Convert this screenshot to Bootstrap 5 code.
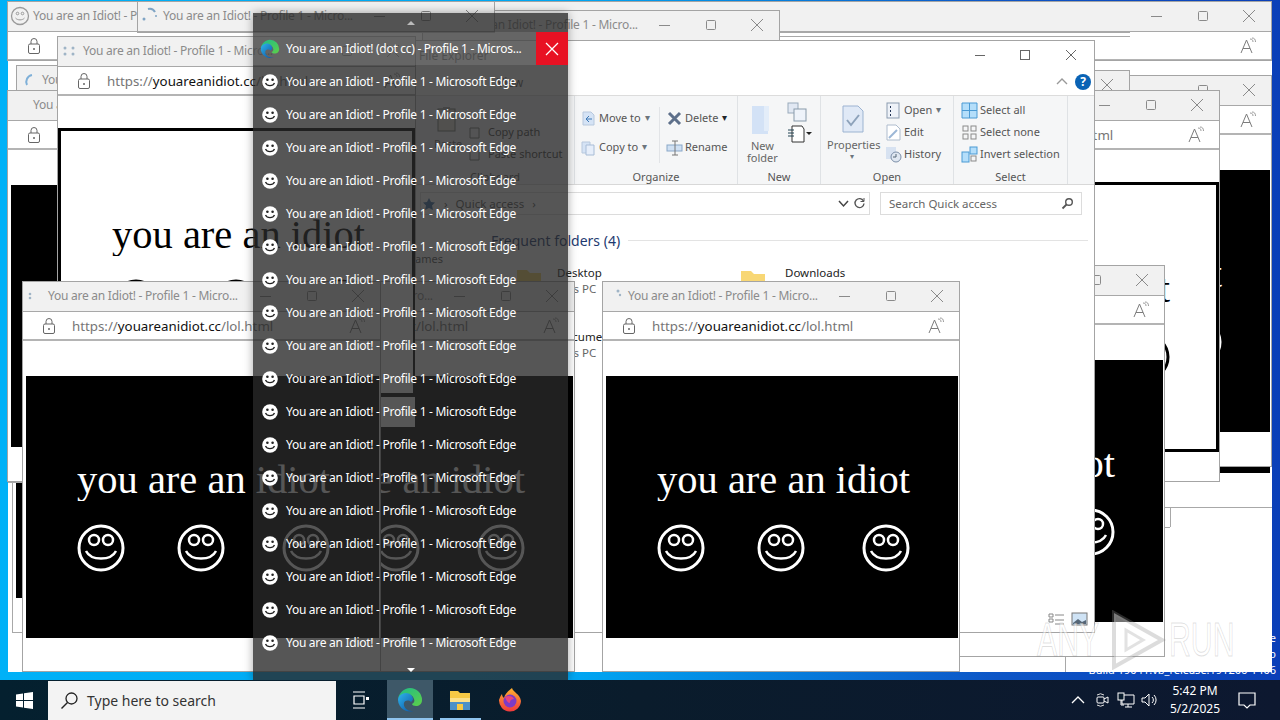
<!DOCTYPE html>
<html lang="en">
<head>
  <meta charset="UTF-8">
  <title>You are an Idiot!</title>
  <link href="https://cdn.jsdelivr.net/npm/bootstrap@5.3.0/dist/css/bootstrap.min.css" rel="stylesheet">
  <style>
    html, body { margin: 0; width: 1280px; height: 720px; overflow: hidden; background: #000; }
    body, .ui-font { font-family: "Noto Sans", "Open Sans", sans-serif; }
    .desk { position: relative; width: 1280px; height: 720px; overflow: hidden; background: linear-gradient(90deg, #00b1f7 0%, #00a6f2 45%, #0d55c6 78%, #0a3fb8 100%); }
    .free { position: absolute; }
    .base-sheet { left: 8px; top: 1px; width: 1264px; height: 671px; background: #fff; border-top: 1px solid #a8a8a8; }
    .build-notes { right: 4px; bottom: 42px; color: #fff; font-size: 11px; line-height: 16px; text-align: right; white-space: nowrap; }

    /* edge app windows */
    .app-win { position: absolute; background: #fff; border: 1px solid #a4a4a4; overflow: hidden; }
    .app-title { height: 30px; background: #f1f1f1; border-bottom: 1px solid #a8a8a8; color: #8b8b8b; font-size: 12px; letter-spacing: -.25px; padding: 0 0 2px 25px; position: relative; white-space: nowrap; }
    .app-ico { position: absolute; left: 2px; top: 4px; width: 20px; height: 20px; }
    .app-btn { position: absolute; top: 6px; width: 16px; height: 16px; }
    .btn-x { right: 14px; } .btn-m { right: 60px; } .btn-n { right: 106px; }
    .app-url { height: 29px; border-bottom: 2px solid #b4b4b4; color: #757575; font-size: 13.3px; padding: 2px 0 0 49px; position: relative; white-space: nowrap; }
    .app-url b { color: #111; font-weight: 400; }
    .ico-lock { position: absolute; left: 18px; top: 5px; width: 16px; height: 18px; }
    .ico-read { position: absolute; right: 13px; top: 5px; width: 18px; height: 18px; }
    .page-black { position: absolute; left: 3px; right: 1px; top: 94px; height: 262px; background: #000; color: #fff; padding: 83px 0 0 51px; }
    .page-white { position: absolute; left: 0; right: 0; top: 91px; height: 270px; background: #fff; color: #000; border: 3px solid #000; padding: 83px 0 0 51px; }
    .idiot-line { width: 254px; height: 42px; line-height: 42px; overflow: hidden; font-family: "Liberation Serif", serif; font-size: 40.5px; white-space: nowrap; }
    .face-row { margin-top: 23px; width: 253px; }
    .face-row svg { width: 48px; height: 48px; flex: none; }
    .face-row svg:nth-child(2) { margin-left: 52px; }
    .face-row svg:nth-child(3) { margin-left: 57px; }

    /* scraps of windows further down the pile */
    .scrap-k { position: absolute; background: #000; }
    .scrap-l { position: absolute; background: #a8a8a8; }
    .scrap-w { position: absolute; background: #fff; }

    /* file explorer */
    .explorer { left: 415px; top: 40px; width: 680px; height: 593px; background: #fff; border: 1px solid #a4a4a4; color: #444; font-size: 11px; }
    .ex-head { height: 29px; font-size: 12px; padding-left: 3px; position: relative; color: #777; }
    .ex-head .app-btn { top: 6px; }
    .ex-head .btn-x { right: 15px; } .ex-head .btn-m { right: 61px; } .ex-head .btn-n { right: 106px; }
    .ex-tabs { height: 25px; position: relative; color: #666; font-size: 12px; }
    .ex-tabs span { position: absolute; left: 81px; top: 4px; }
    .ex-help { position: absolute; right: 3px; top: 4px; width: 16px; height: 16px; border-radius: 50%; background: #0a63b5; color: #fff; font-size: 12px; font-weight: 700; line-height: 16px; text-align: center; }
    .ex-up { position: absolute; right: 26px; top: 7px; width: 12px; height: 10px; }
    .ribbon { height: 90px; background: #f5f6f7; border-top: 1px solid #dcdcdc; border-bottom: 1px solid #d8d8d8; }
    .rb-group { position: relative; height: 88px; border-right: 1px solid #dfe2e5; flex: none; }
    .rb-label { position: absolute; left: 0; right: 0; bottom: -1px; text-align: center; color: #555; font-size: 11px; }
    .rb-small { height: 22px; white-space: nowrap; color: #555; }
    .rb-small svg { width: 17px; height: 17px; margin-right: 2px; flex: none; }
    .rb-big { text-align: center; color: #666; line-height: 12px; }
    .grp-clip { width: 159px; } .grp-org { width: 163px; padding-top: 11px; } .grp-new { width: 83px; } .grp-open { width: 133px; } .grp-sel { width: 114px; padding: 3px 0 0 7px; }
    .org-left { width: 85px; padding-left: 5px; border-right: 1px solid #e2e4e7; height: 56px; }
    .org-right { padding-left: 6px; }
    .org-left .rb-small, .org-right .rb-small { margin-bottom: 7px; }
    .crumb-row { height: 36px; padding: 7px 12px 6px 4px; }
    .crumb-box { flex: 1; height: 23px; border: 1px solid #dcdcdc; color: #555; font-size: 11.5px; padding-left: 1px; position: relative; }
    .find-box { width: 202px; height: 23px; margin-left: 10px; border: 1px solid #dcdcdc; color: #666; padding-left: 8px; font-size: 11.5px; position: relative; }
    .freq-head { color: #1e3a70; font-size: 14px; padding-left: 75px; height: 20px; margin-top: 9px; white-space: nowrap; }
    .freq-head i { flex: 1; height: 1px; background: #e3e3e3; margin: 0 6px 0 8px; }
    .ghost-names { position: absolute; left: -1px; top: 210px; color: #555; font-size: 11px; }
    .tile { position: absolute; white-space: nowrap; line-height: 16px; color: #222; font-size: 11.5px; }
    .tile span { display: block; color: #666; }
    .view-ico { position: absolute; bottom: 6px; width: 17px; height: 14px; }

    /* taskbar window list */
    .thumb-list { left: 253px; top: 13px; width: 315px; height: 667px; background: rgba(40, 40, 40, .79); box-shadow: 0 0 9px rgba(0, 0, 0, .35); color: #fff; font-size: 12px; letter-spacing: -.28px; }
    .thumb-cap { height: 19px; }
    .thumb-row { height: 33px; padding-left: 7px; position: relative; white-space: nowrap; }
    .thumb-row svg { width: 20px; height: 20px; margin-right: 6px; flex: none; }
    .thumb-on { background: rgba(255, 255, 255, .11); }
    .thumb-close { position: absolute; right: 0; top: 0; width: 32px; height: 33px; background: #e81123; }
    .thumb-close svg { margin: 0; width: 16px; height: 16px; }
    .tri-up { width: 0; height: 0; border-left: 4px solid transparent; border-right: 4px solid transparent; border-bottom: 4px solid #bbb; }
    .tri-down { width: 0; height: 0; border-left: 4px solid transparent; border-right: 4px solid transparent; border-top: 4px solid #fff; margin-top: 9px; }

    /* watermark */
    .mark-any { left: 1037px; top: 610px; height: 60px; color: rgba(255, 255, 255, .5); font-family: "Liberation Sans", sans-serif; font-size: 48px; line-height: 60px; -webkit-text-stroke: 1px rgba(130, 130, 130, .25); white-space: nowrap; }
    .mark-any svg { width: 60px; height: 60px; flex: none; margin: 0 1px 0 5px; }
    .mark-txt { display: inline-block; width: 66px; transform: scaleX(.63); transform-origin: left center; }

    /* taskbar */
    .taskbar { left: 0; right: 0; bottom: 0; height: 40px; background: linear-gradient(90deg, #04202f 0%, #0a1c2c 50%, #0d1830 100%); color: #fff; }
    .start-cell { width: 48px; height: 40px; flex: none; }
    .find-cell { width: 288px; height: 39px; margin-top: 1px; background: #f3f3f3; color: #333; font-size: 14px; padding-left: 12px; flex: none; }
    .find-cell svg { width: 19px; height: 19px; margin-right: 8px; }
    .view-cell { width: 49px; height: 40px; flex: none; margin-right: 2px; }
    .tb-cell { width: 46px; height: 40px; flex: none; position: relative; }
    .tb-cell svg { width: 26px; height: 26px; }
    .tb-live { background: #3e5868; }
    .tb-live::after, .tb-run::after { content: ""; position: absolute; left: 0; right: 0; bottom: 0; height: 2px; background: #8fc4ee; }
    .tb-run::after { left: 3px; right: 2px; }
    .tray-wrap { margin-left: auto; height: 40px; margin-right: 14px; }
    .tray-ico { width: 24px; height: 40px; }
    .tray-ico svg { width: 20px; height: 20px; }
    .clock { width: 66px; text-align: center; font-size: 12px; line-height: 18px; }
    .note-cell { width: 38px; height: 40px; }
    .note-cell svg { width: 20px; height: 20px; }
  </style>
</head>
<body>
  <div class="desk">
    <div class="free build-notes">Test Mode<br>Windows 10 Pro<br>Build 19041.vb_release.191206-1406</div>
    <div class="free base-sheet"></div>

    <div id="pile-back"></div>

    <!-- file explorer -->
    <div class="free explorer d-flex flex-column">
      <div class="ex-head d-flex align-items-center">
        File Explorer
        <svg class="app-btn btn-x" viewBox="0 0 16 16"><path d="M3 3l10 10M13 3L3 13" stroke="#666" fill="none"/></svg>
        <svg class="app-btn btn-m" viewBox="0 0 16 16"><rect x="3.5" y="3.5" width="9" height="9" stroke="#666" fill="none"/></svg>
        <svg class="app-btn btn-n" viewBox="0 0 16 16"><path d="M3 8.5h10" stroke="#666"/></svg>
      </div>
      <div class="ex-tabs">
        <span>View</span>
        <svg class="ex-up" viewBox="0 0 12 10"><path d="M1 7l5-5 5 5" stroke="#999" fill="none" stroke-width="1.4"/></svg>
        <div class="ex-help">?</div>
      </div>
      <div class="ribbon d-flex">
        <div class="rb-group grp-clip">
          <svg class="free" style="left:21px;top:10px" width="20" height="26" viewBox="0 0 20 26"><rect x="1" y="3" width="17" height="22" fill="#e8e4d8" stroke="#777"/><rect x="6" y="1" width="7" height="4" fill="#aaa"/></svg>
          <div class="free rb-big" style="left:18px;top:42px">Paste</div>
          <svg class="free" style="left:52px;top:30px" width="14" height="14" viewBox="0 0 14 14"><path d="M2 2h9v10H2z" fill="none" stroke="#777"/></svg>
          <div class="free" style="left:72px;top:28px">Copy path</div>
          <svg class="free" style="left:52px;top:52px" width="14" height="14" viewBox="0 0 14 14"><path d="M2 2h9v10H2z" fill="none" stroke="#777"/></svg>
          <div class="free" style="left:72px;top:50px">Paste shortcut</div>
          <div class="rb-label">Clipboard</div>
        </div>
        <div class="rb-group grp-org d-flex">
          <div class="org-left">
            <div class="rb-small d-flex align-items-center"><svg viewBox="0 0 17 17"><path d="M3 2h8l3 3v10H3z" fill="#d5e3f5" stroke="#b7c8dd"/><path d="M12 9H6m3-3L6 9l3 3" stroke="#3c78b5" fill="none"/></svg>Move to <small class="ms-1 text-secondary">▾</small></div>
            <div class="rb-small d-flex align-items-center"><svg viewBox="0 0 17 17"><path d="M2 3h8v11H2z" fill="#d5e3f5" stroke="#b7c8dd"/><path d="M6 6h8v10H6z" fill="#e6eefa" stroke="#a8bcd6"/></svg>Copy to <small class="ms-1 text-secondary">▾</small></div>
          </div>
          <div class="org-right">
            <div class="rb-small d-flex align-items-center"><svg viewBox="0 0 17 17"><path d="M3 3l11 11M14 3L3 14" stroke="#5d6f8a" stroke-width="3"/></svg>Delete <small class="ms-1 text-dark">▾</small></div>
            <div class="rb-small d-flex align-items-center"><svg viewBox="0 0 17 17"><rect x="1" y="6" width="15" height="6" fill="#cfe0f3" stroke="#8aa7c8"/><path d="M9 2v14M6 2h6M6 16h6" stroke="#777" fill="none"/></svg>Rename</div>
          </div>
          <div class="rb-label">Organize</div>
        </div>
        <div class="rb-group grp-new">
          <svg class="free" style="left:12px;top:9px" width="22" height="30" viewBox="0 0 22 30"><path d="M2 1h16v28H2z" fill="#d3e2f6"/><path d="M14 1h5v25h-5z" fill="#e3edf9"/></svg>
          <div class="free rb-big" style="left:9px;top:44px">New<br>folder</div>
          <svg class="free" style="left:48px;top:6px" width="26" height="20" viewBox="0 0 26 20"><rect x="2" y="1" width="10" height="10" fill="#e1e8f3" stroke="#9ab"/><rect x="8" y="7" width="12" height="12" fill="#eef3fa" stroke="#89a"/></svg>
          <svg class="free" style="left:48px;top:28px" width="26" height="20" viewBox="0 0 26 20"><path d="M6 2h10l2 3v13H6z" fill="#fff" stroke="#333"/><path d="M2 6h6M2 9h6M2 12h6" stroke="#245" /><path d="M20 8l3 3 3-3z" fill="#222"/></svg>
          <div class="rb-label">New</div>
        </div>
        <div class="rb-group grp-open">
          <svg class="free" style="left:21px;top:9px" width="22" height="28" viewBox="0 0 22 28"><path d="M1 1h15l5 5v21H1z" fill="#e0e9f6" stroke="#9cb3d1"/><path d="M5 15l4 5 8-10" stroke="#8da2ba" stroke-width="2" fill="none"/></svg>
          <div class="free rb-big" style="left:6px;top:43px">Properties</div>
          <div class="free text-secondary" style="left:29px;top:54px;font-size:8px">▾</div>
          <div class="free" style="left:64px;top:3px">
            <div class="rb-small d-flex align-items-center"><svg viewBox="0 0 17 17"><rect x="2" y="1" width="12" height="15" fill="#eef2f8" stroke="#8b9bb0"/><path d="M5 5h1M5 9h1M5 13h1" stroke="#235" stroke-width="2"/></svg>Open <small class="ms-1 text-secondary">▾</small></div>
            <div class="rb-small d-flex align-items-center"><svg viewBox="0 0 17 17"><path d="M2 1h9l4 4v11H2z" fill="#fff" stroke="#aebccd"/><path d="M4 14l8-8" stroke="#9cb7d6" stroke-width="2"/></svg>Edit</div>
            <div class="rb-small d-flex align-items-center"><svg viewBox="0 0 17 17"><rect x="1" y="1" width="10" height="12" fill="#d7e2f1"/><circle cx="11" cy="11" r="5" fill="#dfe7f1" stroke="#7c8fa8"/><path d="M11 8v3h-3" stroke="#567" fill="none"/></svg>History</div>
          </div>
          <div class="rb-label">Open</div>
        </div>
        <div class="rb-group grp-sel">
          <div class="rb-small d-flex align-items-center"><svg viewBox="0 0 17 17"><path d="M1 1h15v15H1z" fill="#b4defa" stroke="#4a9ad4"/><path d="M8.5 1v15M1 8.5h15" stroke="#4a9ad4"/></svg>Select all</div>
          <div class="rb-small d-flex align-items-center"><svg viewBox="0 0 17 17"><g fill="none" stroke="#8a8a8a"><rect x="2" y="2" width="5" height="5"/><rect x="10" y="2" width="5" height="5"/><rect x="2" y="10" width="5" height="5"/><rect x="10" y="10" width="5" height="5"/></g></svg>Select none</div>
          <div class="rb-small d-flex align-items-center"><svg viewBox="0 0 17 17"><rect x="1" y="6" width="7" height="10" fill="#b4defa" stroke="#4a9ad4"/><rect x="9" y="1" width="7" height="7" fill="#b4defa" stroke="#4a9ad4"/><rect x="10" y="10" width="5" height="5" fill="none" stroke="#8a8a8a"/></svg>Invert selection</div>
          <div class="rb-label">Select</div>
        </div>
      </div>
      <div class="crumb-row d-flex">
        <div class="crumb-box d-flex align-items-center">
          <svg width="14" height="14" viewBox="0 0 14 14" class="me-1"><path d="M7 1l2 4 4 .5-3 3 1 4.5-4-2-4 2 1-4.5-3-3L5 5z" fill="#3a6ea5"/></svg>
          <span class="ms-1 me-2">›</span>Quick access<span class="ms-2">›</span>
          <svg class="free" style="right:20px;top:6px" width="11" height="10" viewBox="0 0 11 10"><path d="M1 2l4.5 5L10 2" stroke="#444" fill="none" stroke-width="1.5"/></svg>
          <svg class="free" style="right:3px;top:4px" width="13" height="13" viewBox="0 0 13 13"><path d="M10.5 4A4.5 4.5 0 1 0 11 6.500" stroke="#555" fill="none" stroke-width="1.4"/><path d="M11 1v3.500H7.500" stroke="#555" fill="none"/></svg>
        </div>
        <div class="find-box d-flex align-items-center">Search Quick access
          <svg class="free" style="right:7px;top:4px" width="13" height="13" viewBox="0 0 13 13"><circle cx="8" cy="5" r="3.300" stroke="#555" fill="none" stroke-width="1.400"/><path d="M5.500 7.500L1.500 11.500" stroke="#555" stroke-width="1.800"/></svg>
        </div>
      </div>
      <div class="freq-head d-flex align-items-center">Frequent folders (4)<i></i></div>
      <div class="ghost-names">ames</div>
      <svg class="free" style="left:100px;top:228px" width="26" height="22" viewBox="0 0 26 22"><path d="M1 1h10l3 3h11v17H1z" fill="#f6d365"/></svg>
      <div class="tile" style="left:141px;top:224px">Desktop<span>This PC</span></div>
      <svg class="free" style="left:324px;top:229px" width="26" height="22" viewBox="0 0 26 22"><path d="M1 1h10l3 3h11v17H1z" fill="#f8d775"/></svg>
      <div class="tile" style="left:369px;top:224px">Downloads</div>
      <div class="tile" style="left:141px;top:288px">Documents<span>This PC</span></div>
      <svg class="view-ico" style="right:29px" viewBox="0 0 17 14"><path d="M1 2h4v3H1zM1 7h4v3H1zM7 3h9M7 8h9M7 12h9" stroke="#888" fill="none"/></svg>
      <svg class="view-ico" style="right:6px" viewBox="0 0 17 14"><rect x="1" y="1" width="15" height="12" fill="#cfe3f5" stroke="#777"/><path d="M2 11l5-4 4 3 4-2v4H2z" fill="#567"/></svg>
    </div>

    <div id="pile-front"></div>

    <!-- holes in the top window where it hadn't repainted -->
    <div class="scrap-w" style="left:381px;top:282px;width:32px;height:111px"></div>
    <div class="scrap-k" style="left:413px;top:282px;width:2px;height:111px"></div>
    <div class="scrap-w" style="left:381px;top:397px;width:34px;height:30px"></div>

    <!-- window list from the taskbar button -->
    <div id="thumbs" class="free thumb-list d-flex flex-column">
      <div class="thumb-cap d-flex justify-content-center align-items-center"><div class="tri-up"></div></div>
    </div>

    <div class="free mark-any d-flex align-items-center"><span class="mark-txt">ANY</span><svg viewBox="0 0 60 60"><path d="M6 3v54l48-27z" fill="rgba(255,255,255,.45)" stroke="rgba(140,140,140,.3)" stroke-width="4"/><path d="M18 20v20l17-10z" fill="rgba(255,255,255,.2)" stroke="rgba(140,140,140,.25)" stroke-width="3"/></svg><span class="mark-txt">RUN</span></div>

    <!-- taskbar -->
    <div class="free taskbar d-flex align-items-center ui-font">
      <div class="start-cell d-flex align-items-center justify-content-center">
        <svg width="17" height="17" viewBox="0 0 17 17"><path d="M0 2.500l7-1V8H0zM8 1.300L17 0v8H8zM0 9h7v6.500l-7-1zM8 9h9v8l-9-1.300z" fill="#fff"/></svg>
      </div>
      <div class="find-cell d-flex align-items-center">
        <svg viewBox="0 0 19 19"><circle cx="11.500" cy="7.500" r="5.500" stroke="#222" fill="none" stroke-width="1.300"/><path d="M7.500 11.500L1.500 17.500" stroke="#222" stroke-width="1.500"/></svg>
        Type here to search
      </div>
      <div class="view-cell d-flex align-items-center justify-content-center">
        <svg width="16" height="18" viewBox="0 0 16 18"><path d="M0 1h12M0 17h12M1 5h10v8H1z" stroke="#fff" fill="none" stroke-width="1.200"/><rect x="13" y="6" width="3" height="3" fill="#fff"/></svg>
      </div>
      <div class="tb-cell tb-live d-flex align-items-center justify-content-center">
        <svg viewBox="0 0 26 26"><use href="#edge-mark"/></svg>
      </div>
      <div class="tb-cell tb-run ms-1 d-flex align-items-center justify-content-center">
        <svg viewBox="0 0 26 26"><path d="M3 4h8l2 2h10v17H3z" fill="#f6c945"/><rect x="3" y="13" width="20" height="10" fill="#4a90c8"/><rect x="3" y="11" width="20" height="4" fill="#fbe08a"/><rect x="10" y="17" width="6" height="6" fill="#f6c945"/></svg>
      </div>
      <div class="tb-cell ms-1 d-flex align-items-center justify-content-center">
        <svg viewBox="0 0 26 26"><defs><linearGradient id="fx" x1="0" y1="0" x2="0" y2="1"><stop offset="0" stop-color="#ffb22e"/><stop offset="1" stop-color="#f0393d"/></linearGradient></defs><path d="M15 1c1 4 8 6 9 13a11 11 0 1 1-22-1c1-3 2-5 3-6 0 2 1 3 2 4 1-4 4-7 8-10z" fill="url(#fx)"/><circle cx="13" cy="14" r="6.500" fill="#7c3bc6"/><path d="M8 10c3-2 8-1 9 2-2 0-4 1-4 3s-3 1-5-5z" fill="#e9447d"/></svg>
      </div>
      <div class="tray-wrap d-flex align-items-center">
        <div class="tray-ico d-flex align-items-center justify-content-center"><svg viewBox="0 0 20 20"><path d="M4 13l6-6 6 6" stroke="#fff" fill="none" stroke-width="1.300"/></svg></div>
        <div class="tray-ico d-flex align-items-center justify-content-center"><svg viewBox="0 0 20 20"><path d="M5 5a6 6 0 0 1 7 0M5 15a6 6 0 0 0 7 0" stroke="#ddd" fill="none"/><rect x="5" y="7" width="7" height="6" rx="1" stroke="#fff" fill="none"/><path d="M12 9l4-2v6l-4-2" stroke="#fff" fill="none"/></svg></div>
        <div class="tray-ico d-flex align-items-center justify-content-center"><svg viewBox="0 0 20 20"><path d="M6 5h12v9H6zM12 14v3M9 17h7" stroke="#fff" fill="none"/><rect x="2" y="3" width="6" height="7" fill="#0a1c2c" stroke="#fff"/><path d="M5 10v5h3" stroke="#fff" fill="none"/></svg></div>
        <div class="tray-ico d-flex align-items-center justify-content-center"><svg viewBox="0 0 20 20"><path d="M2 8h3l4-4v12l-4-4H2z" stroke="#fff" fill="none"/><path d="M12 7a4 4 0 0 1 0 6M14 5a7 7 0 0 1 0 10" stroke="#fff" fill="none"/></svg></div>
        <div class="clock">5:42 PM<br>5/2/2025</div>
        <div class="note-cell d-flex align-items-center justify-content-center"><svg viewBox="0 0 20 20"><path d="M2 3h16v12h-5l-3 3-3-3H2z" stroke="#fff" fill="none" stroke-width="1.200"/></svg></div>
      </div>
    </div>

    <svg width="0" height="0" class="free">
      <defs>
        <linearGradient id="eg1" x1="0" y1="0" x2="1" y2="1"><stop offset="0" stop-color="#2fb5ec"/><stop offset="1" stop-color="#0a4fa0"/></linearGradient>
        <linearGradient id="eg2" x1="0" y1="0" x2="1" y2="1"><stop offset="0" stop-color="#1dbb8a"/><stop offset="1" stop-color="#5ed048"/></linearGradient>
        <symbol id="edge-mark" viewBox="0 0 26 26">
          <path d="M13 1a12 12 0 0 1 12 12c0 4-3 6-6 6-2 0-4-1-4-2 2-1 3-3 2-5-1-4-5-5-8-5-4 0-7 2-8 5C2 6 7 1 13 1z" fill="url(#eg2)"/>
          <path d="M1 13c0-4 4-7 8-7 4 0 7 3 7 6 0 1-1 2-2 3-2-2-6-2-7 1-1 4 3 8 8 8 1 0 2 0 3-.5A12 12 0 0 1 1 13z" fill="url(#eg1)"/>
        </symbol>
      </defs>
    </svg>
  </div>

  <script>
    const iconos = {
      smile: '<svg class="app-ico" viewBox="0 0 20 20"><circle cx="10" cy="10" r="8.500" fill="none" stroke="#9a9a9a" stroke-width="1.300"/><circle cx="7.500" cy="7.500" r="1.300" fill="none" stroke="#9a9a9a"/><circle cx="12.500" cy="7.500" r="1.300" fill="none" stroke="#9a9a9a"/><path d="M5.500 12c2 2.500 7 2.500 9 0" stroke="#9a9a9a" fill="none"/></svg>',
      dots: '<svg class="app-ico" viewBox="0 0 20 20"><g fill="#9fb4c6"><circle cx="5" cy="8" r="1.300"/><circle cx="5" cy="12" r="1.300"/></g></svg>',
      dots3: '<svg class="app-ico" viewBox="0 0 20 20"><g fill="#9fb4c6"><circle cx="13" cy="5" r="1.500"/><circle cx="15" cy="9" r="1.200"/></g></svg>',
      dots2: '<svg class="app-ico" viewBox="0 0 20 20"><g fill="#9fb4c6"><circle cx="5" cy="7" r="1.500"/><circle cx="5" cy="13" r="1.500"/><circle cx="13" cy="7" r="1.500"/><circle cx="13" cy="13" r="1.500"/></g></svg>',
      arc: '<svg class="app-ico" viewBox="0 0 20 20"><path d="M8 15a7 7 0 0 1 5-10" stroke="#7fb0d8" stroke-width="2" fill="none"/></svg>',
      arc2: '<svg class="app-ico" viewBox="0 0 20 20"><path d="M8 3a6 6 0 0 1 7 3" stroke="#7fa4c4" stroke-width="2" fill="none"/><circle cx="4" cy="13" r="1.500" fill="#7fa4c4"/><circle cx="16" cy="10" r="1" fill="#7fa4c4"/></svg>',
      none: ''
    };

    const cara = '<svg viewBox="0 0 48 48"><circle cx="24" cy="24" r="22" fill="none" stroke="currentColor" stroke-width="3"/><circle cx="17" cy="16" r="5" fill="none" stroke="currentColor" stroke-width="2.500"/><circle cx="31" cy="16" r="5" fill="none" stroke="currentColor" stroke-width="2.500"/><path d="M9 27c5 10 25 10 30 0" fill="none" stroke="currentColor" stroke-width="2.500"/></svg>';
    const caraLista = '<svg viewBox="0 0 20 20"><circle cx="10" cy="10" r="7.800" fill="#fff"/><circle cx="7.400" cy="7.800" r="1.300" fill="#222"/><circle cx="12.600" cy="7.800" r="1.300" fill="#222"/><path d="M5.500 11c1.500 3.500 7.500 3.500 9 0" stroke="#222" stroke-width="1.300" fill="none"/></svg>';

    // x, y, ancho, alto, icono, tipo de pagina
    const ventana = (x, y, w, h, icono, pagina, chrome) => {
      const div = document.createElement('div');
      div.className = 'app-win';
      div.style.cssText = `left:${x}px;top:${y}px;width:${w}px;height:${h}px`;
      let html = `<div class="app-title d-flex align-items-center">${iconos[icono]}You are an Idiot! - Profile 1 - Micro...
        <svg class="app-btn btn-x" viewBox="0 0 16 16"><path d="M2 2l12 12M14 2L2 14" stroke="#8a8a8a" fill="none"/></svg>
        <svg class="app-btn btn-m" viewBox="0 0 16 16"><rect x="3.500" y="3.500" width="9" height="9" rx="1" stroke="#8a8a8a" fill="none"/></svg>
        <svg class="app-btn btn-n" viewBox="0 0 16 16"><path d="M2 8.500h11" stroke="#8a8a8a"/></svg>
      </div>`;
      if (chrome !== 'solo-titulo') {
        html += `<div class="app-url d-flex align-items-center">
          <svg class="ico-lock" viewBox="0 0 16 18"><path d="M5 7V4.500a3 3 0 0 1 6 0V7" fill="none" stroke="#666"/><rect x="2.500" y="7" width="11" height="9.500" rx="1.500" fill="none" stroke="#666"/><circle cx="8" cy="12" r="1" fill="#666"/></svg>
          <span>https://<b>youareanidiot.cc</b>/lol.html</span>
          <svg class="ico-read" viewBox="0 0 18 18"><path d="M1 16L6.500 3 12 16M3 11.500h7" fill="none" stroke="#7c7c7c"/><path d="M10 2c2 0 3 1 3 3M12 1c2.500 0 3.500 1.500 3.500 4" fill="none" stroke="#9a9a9a"/></svg>
        </div>`;
      }
      if (pagina) {
        html += `<div class="page-${pagina}">
          <div class="idiot-line">you are an idiot</div>
          <div class="face-row d-flex">${cara}${cara}${cara}</div>
        </div>`;
      }
      div.innerHTML = html;
      return div;
    };

    const raya = (clase, x, y, w, h) => {
      const div = document.createElement('div');
      div.className = clase;
      div.style.cssText = `left:${x}px;top:${y}px;width:${w}px;height:${h}px`;
      return div;
    };

    const atras = document.getElementById('pile-back');
    [
      ventana(7, 1, 1265, 60, 'smile', null),
      raya('scrap-k', 1220, 467, 50, 6),
      raya('scrap-l', 1165, 507, 107, 1),
      raya('scrap-l', 1170, 507, 1, 20),
      raya('scrap-l', 1165, 527, 5, 1),
      raya('scrap-k', 16, 482, 7, 116),
      raya('scrap-l', 8, 482, 15, 1),
      raya('scrap-l', 12, 482, 1, 150),
      raya('scrap-l', 12, 632, 11, 1),
      raya('scrap-l', 1065, 657, 1, 15),
      ventana(914, 75, 358, 392, 'none', 'black'),
      ventana(772, 70, 358, 60, 'none', null, 'solo-titulo'),
      ventana(862, 90, 358, 392, 'none', 'white'),
      ventana(807, 265, 358, 392, 'none', 'black'),
      ventana(16, 65, 358, 30, 'arc', null, 'solo-titulo'),
      ventana(7, 90, 359, 392, 'none', 'black'),
      raya('scrap-l', 780, 32, 350, 1),
      raya('scrap-l', 780, 36, 350, 1),
      ventana(422, 10, 358, 31, 'none', null, 'solo-titulo'),
      ventana(137, 1, 358, 32, 'arc2', null, 'solo-titulo')
    ].forEach(v => atras.appendChild(v));

    const frente = document.getElementById('pile-front');
    [
      ventana(57, 36, 359, 392, 'dots2', 'white'),
      ventana(217, 281, 358, 391, 'none', 'black'),
      ventana(22, 281, 359, 391, 'dots', 'black'),
      ventana(602, 281, 358, 391, 'dots3', 'black')
    ].forEach(v => frente.appendChild(v));

    // Lista de ventanas
    const lista = document.getElementById('thumbs');
    for (let i = 0; i < 19; i++) {
      const fila = document.createElement('div');
      fila.className = 'thumb-row d-flex align-items-center' + (i === 0 ? ' thumb-on' : '');
      if (i === 0) {
        fila.innerHTML = '<svg viewBox="0 0 26 26"><use href="#edge-mark"/></svg>You are an Idiot! (dot cc) - Profile 1 - Micros...' +
          '<div class="thumb-close d-flex align-items-center justify-content-center"><svg viewBox="0 0 16 16"><path d="M2 2l12 12M14 2L2 14" stroke="#fff" stroke-width="1.300"/></svg></div>';
      } else {
        fila.innerHTML = caraLista + 'You are an Idiot! - Profile 1 - Microsoft Edge';
      }
      lista.appendChild(fila);
    }
    const pie = document.createElement('div');
    pie.className = 'd-flex justify-content-center';
    pie.innerHTML = '<div class="tri-down"></div>';
    lista.appendChild(pie);
  </script>
  <script src="https://cdn.jsdelivr.net/npm/bootstrap@5.3.0/dist/js/bootstrap.bundle.min.js"></script>
</body>
</html>
